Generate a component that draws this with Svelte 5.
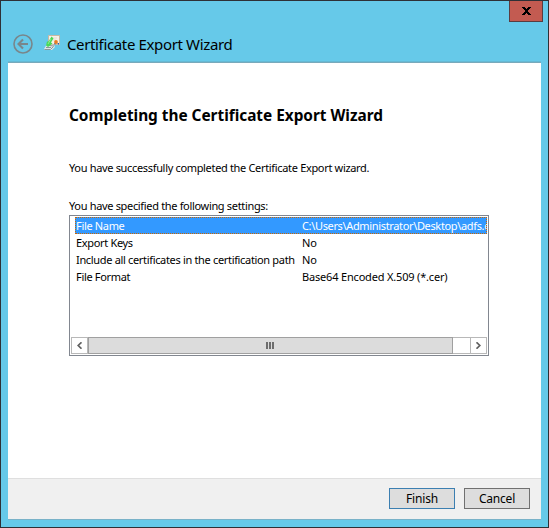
<script lang="ts">
	const settings = [
		{ name: 'File Name', value: 'C:\\Users\\Administrator\\Desktop\\adfs.cer' },
		{ name: 'Export Keys', value: 'No' },
		{ name: 'Include all certificates in the certification path', value: 'No' },
		{ name: 'File Format', value: 'Base64 Encoded X.509 (*.cer)' }
	];

	let selected = $state(0);
</script>

<div class="window">
	<header>
		<div class="caption">
			<button class="close" aria-label="Close">
				<svg width="9" height="8" viewBox="0 0 9 8" shape-rendering="crispEdges">
					<path
						d="M0 0h3v1h1v1h1v-1h1v-1h3v1h-1v1h-1v1h-1v2h1v1h1v1h1v1h-3v-1h-1v-1h-1v1h-1v1h-3v-1h1v-1h1v-1h1v-2h-1v-1h-1v-1h-1z"
					/>
				</svg>
			</button>
		</div>
		<div class="title-row">
			<svg class="back" width="20" height="20" viewBox="0 0 20 20">
				<circle cx="10" cy="10" r="9" />
				<path d="M15 10H6M10 5.5L5.5 10L10 14.5" />
			</svg>
			<svg class="cert" width="16" height="16" viewBox="0 0 16 16">
				<path d="M4.5 .5h11v9h-11z" fill="#f6f1e8" stroke="#c9b9a3" />
				<path d="M8 3h5M9 5h3" stroke="#e4ddd4" />
				<path d="M0 14l3-5 7 1 1 2-3 3H1z" fill="#dfe8e8" />
				<path d="M.5 14.5h6l3-3M2 12.5h5M5 10.5l5 .5" stroke="#8b989a" fill="none" />
				<path d="M2 10.5l1-4h1.500l3-5 2 2-2.500 4 1.500 1-4.500 3.500z" fill="#48d957" />
				<path d="M4 9l3-5" stroke="#8cf08e" />
				<path d="M10 8h2l-1 2zM13 8h2v2z" fill="#2c65b3" />
				<circle cx="12" cy="7" r="1.900" fill="#e77b20" />
			</svg>
			<span class="title">Certificate Export Wizard</span>
		</div>
	</header>

	<main>
		<h1>Completing the Certificate Export Wizard</h1>
		<p class="done">You have successfully completed the Certificate Export wizard.</p>
		<p class="specified">You have specified the following settings:</p>

		<div class="list">
			<div class="rows">
				{#each settings as setting, i}
					<button class="row" class:selected={selected === i} onclick={() => (selected = i)}>
						<span class="name">{setting.name}</span>
						<span class="value">{setting.value}</span>
					</button>
				{/each}
			</div>
			<div class="scrollbar">
				<div class="arrow">
					<svg width="5" height="7" viewBox="0 0 5 7"><path d="M4.5 .3L1.2 3.5L4.5 6.7" /></svg>
				</div>
				<div class="thumb"><i></i><i></i><i></i></div>
				<div class="track"></div>
				<div class="arrow">
					<svg width="5" height="7" viewBox="0 0 5 7"><path d="M.5 .3L3.8 3.5L.5 6.7" /></svg>
				</div>
			</div>
		</div>
	</main>

	<footer>
		<button class="action default">Finish</button>
		<button class="action">Cancel</button>
	</footer>
</div>

<style>
	:global(body) {
		margin: 0;
	}

	.window {
		box-sizing: border-box;
		width: 549px;
		height: 528px;
		border: 1px solid #2e3036;
		padding: 0 7px 7px;
		background: #66c9e9;
		color: #000;
		display: flex;
		flex-direction: column;
		overflow: hidden;
		font: 11px/17px 'Noto Sans', sans-serif;
		letter-spacing: -0.33px;
		white-space: nowrap;
	}

	button {
		font: inherit;
		letter-spacing: inherit;
		color: inherit;
		margin: 0;
		padding: 0;
		border: 0;
		box-sizing: border-box;
	}

	header {
		height: 62px;
		box-sizing: border-box;
		border-bottom: 1px solid #79a9bb;
		box-shadow: inset 0 -1px #65b9d4;
		flex: none;
	}

	.caption {
		height: 21px;
		display: flex;
		justify-content: flex-end;
		margin-right: -2px;
	}

	.close {
		width: 34px;
		height: 21px;
		display: flex;
		align-items: center;
		justify-content: center;
		background: #c35b51;
		border: 1px solid #5a3c40;
		border-top: 0;
	}

	.title-row {
		display: flex;
		align-items: center;
		height: 40px;
		padding: 3px 0 0 5px;
		box-sizing: border-box;
	}

	.back {
		fill: none;
		stroke: #79868b;
		stroke-width: 1.6;
	}

	.back path {
		stroke-width: 2.1;
	}

	.cert {
		margin: -1px 7px 0 11px;
	}

	.title {
		font-size: 15px;
		line-height: 20px;
		letter-spacing: -0.36px;
	}

	main {
		flex: 1;
		background: #fff;
		padding: 41px 52px 0 61px;
	}

	h1 {
		margin: 0;
		font-size: 15.4px;
		line-height: 24px;
		letter-spacing: -0.02px;
	}

	p {
		margin: 0;
	}

	.done {
		margin-top: 31px;
	}

	.specified {
		margin-top: 21px;
	}

	.list {
		box-sizing: border-box;
		width: 420px;
		height: 141px;
		margin-top: 1px;
		padding: 1px;
		border: 1px solid #828790;
		display: flex;
		flex-direction: column;
	}

	.rows {
		flex: 1;
		padding-left: 4px;
		overflow: hidden;
	}

	.row {
		display: flex;
		width: 100%;
		height: 17px;
		padding-left: 1px;
		background: none;
		text-align: left;
		overflow: hidden;
		outline-offset: -1px;
	}

	.row.selected {
		background: #3399ff;
		color: #fff;
		outline: 1px dotted #cc6600;
	}

	.name {
		width: 226px;
		flex: none;
	}

	.value {
		letter-spacing: -0.18px;
	}

	.selected .value {
		letter-spacing: -0.35px;
	}

	.scrollbar {
		height: 17px;
		display: flex;
		flex: none;
	}

	.arrow,
	.thumb,
	.track {
		box-sizing: border-box;
		height: 17px;
		border: 1px solid #b8b8b8;
	}

	.arrow {
		width: 17px;
		display: flex;
		align-items: center;
		justify-content: center;
	}

	.arrow svg {
		fill: none;
		stroke: #606060;
		stroke-width: 1.7;
	}

	.thumb {
		width: 365px;
		background: #dcdcdc;
		border-color: #a0a0a0;
		padding-right: 1px;
		display: flex;
		align-items: center;
		justify-content: center;
		gap: 1px;
	}

	.thumb i {
		width: 2px;
		height: 7px;
		background: #6d6d6d;
	}

	.track {
		flex: 1;
		border-width: 1px 0;
	}

	footer {
		height: 42px;
		box-sizing: border-box;
		flex: none;
		background: #f0f0f0;
		border-top: 1px solid #dfdfdf;
		border-bottom: 1px solid #79b2c8;
		padding: 9px 11px 0 0;
		display: flex;
		justify-content: flex-end;
		gap: 9px;
	}

	.action {
		width: 66px;
		height: 21px;
		background: #ddd;
		border: 1px solid #707070;
		font-size: 12px;
		line-height: 17px;
		letter-spacing: -0.2px;
	}

	.action.default {
		border-color: #3c7fb1;
	}
</style>
